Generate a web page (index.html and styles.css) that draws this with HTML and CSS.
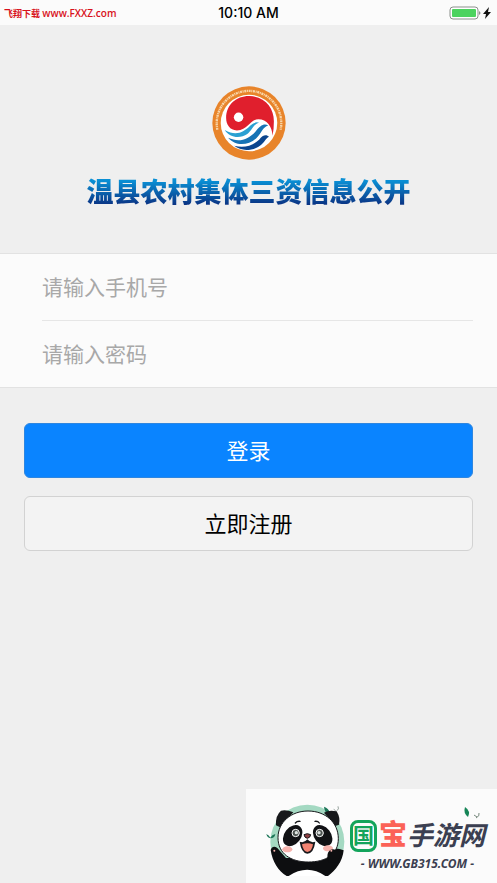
FILE: index.html
```html
<!DOCTYPE html>
<html lang="zh-CN">
<head>
    <meta charset="UTF-8">
    <meta name="viewport" content="width=device-width, initial-scale=1.0">
    <title>温县农村集体三资信息公开</title>
    <link rel="stylesheet" href="styles.css">
</head>
<body>
    <div class="status-bar">
        <span class="source">飞翔下载 <span class="site">www.FXXZ.com</span></span>
        <span class="time">10:10 AM</span>
        <svg class="battery" viewBox="0 0 44 16" width="44" height="16">
            <rect x="1" y="2" width="28" height="12" rx="3" fill="#fff" stroke="#8b8f8b"/>
            <rect x="3" y="4" width="24" height="8" rx="1" fill="#4cd35f"/>
            <path d="M30 6q3 2 0 4z" fill="#8b8f8b"/>
            <path d="M40 2l-6 7h3l-1 5 6-7h-3z" fill="#111"/>
        </svg>
    </div>

    <header class="header">
        <svg class="emblem" viewBox="0 0 220 220" width="74" height="74">
            <circle cx="110" cy="110" r="109" fill="#e8842a"/>
            <path d="M16 130A96 96 0 1 1 204 130" fill="none" stroke="#f8d5a8" stroke-width="7" stroke-dasharray="6 2 3 2"/>
            <circle cx="110" cy="110" r="84" fill="#fff"/>
            <path d="M42 95C42 55 73 29 112 30C158 32 184 66 184 105Q184 130 180 148C179 120 163 99 138 99C112 99 108 132 74 132C53 131 42 115 42 95z" fill="#e01f2d"/>
            <circle cx="79" cy="93" r="14" fill="#fff"/>
            <path d="M38 131C70 150 94 139 115 117Q127 105 140 109C124 112 121 130 105 143C83 158 52 154 38 131z" fill="#2aa0d2"/>
            <path d="M48 154C80 169 107 160 129 136C142 116 158 109 167 118C151 121 147 140 131 156C106 178 69 179 48 154z" fill="#1673b5"/>
            <path d="M66 178C95 185 119 179 140 160C151 144 163 144 169 151C161 155 158 164 148 173C124 194 88 196 66 178z" fill="#0b458e"/>
        </svg>
        <h1>温县农村集体三资信息公开</h1>
    </header>

    <form class="login">
        <div class="fields">
            <input type="tel" placeholder="请输入手机号" aria-label="手机号">
            <input type="password" placeholder="请输入密码" aria-label="密码">
        </div>
        <div class="actions">
            <button type="submit" class="btn btn-primary">登录</button>
            <button type="button" class="btn">立即注册</button>
        </div>
    </form>

    <footer class="brand">
        <svg class="panda" viewBox="0 0 258 246" width="86" height="82">
            <clipPath id="badge"><path d="M0 0H258V234H0z"/></clipPath>
            <circle cx="130" cy="131" r="111" fill="#a4d9c2" clip-path="url(#badge)"/>
            <path d="M7 108q8 3 12 11 5-9 15-11-2 13-15 13Q10 119 7 108zM180 26q14 5 17 16l-2 9q-14-9-15-25z" fill="#1c7658"/>
            <path d="M209 34l6 4M222 25q4 8-3 13" fill="none" stroke="#5d7168" stroke-width="2"/>
            <!-- ears -->
            <path d="M36 82Q34 52 51 38Q67 34 88 43L48 88z" fill="#17181b"/>
            <path d="M180 44Q194 35 218 40Q230 60 225 80L214 84z" fill="#17181b"/>
            <!-- body and paws -->
            <path d="M20 156Q26 140 40 150L66 180H184L196 157Q213 146 239 157C236 190 214 219 192 234H68C43 219 25 191 20 156z" fill="#0d0e10"/>
            <path d="M74 234Q130 196 184 234z" fill="#fff"/>
            <path d="M132 39C184 39 223 73 223 122C223 169 186 192 133 192C80 192 42 167 42 119C42 72 82 39 132 39z" fill="#fff" stroke="#17181b" stroke-width="3"/>
            <!-- face -->
            <ellipse cx="86" cy="113" rx="25" ry="35" transform="rotate(38 86 113)" fill="#111215"/>
            <ellipse cx="176" cy="113" rx="25" ry="35" transform="rotate(-38 176 113)" fill="#111215"/>
            <circle cx="95" cy="105" r="11" fill="#4c5350" stroke="#fff" stroke-width="3"/>
            <circle cx="167" cy="105" r="11" fill="#4c5350" stroke="#fff" stroke-width="3"/>
            <circle cx="97" cy="104" r="5" fill="#dfe5e2"/>
            <circle cx="165" cy="104" r="5" fill="#dfe5e2"/>
            <ellipse cx="70" cy="154" rx="15" ry="9" fill="#f7b4ae"/>
            <ellipse cx="192" cy="151" rx="15" ry="9" fill="#f7b4ae"/>
            <path d="M94 75q5-6 14-5M153 70q9-1 13 5" fill="none" stroke="#17181b" stroke-width="4" stroke-linecap="round"/>
            <path d="M120 110q10-6 20 0-1 9-10 11-9-2-10-11z" fill="#8d3f43" stroke="#17181b" stroke-width="3"/>
            <path d="M107 131q14 5 23-7 10 12 24 7-5 35-24 36-18-2-23-36z" fill="#17181b"/>
            <path d="M114 139q16-7 33 0-3 22-17 23-13-2-16-23z" fill="#f18372"/>
            <path d="M192 164q8-14 22-9l18 8-12 30h-26q-7-14-2-29z" fill="#0d0e10"/>
            <circle cx="202" cy="158" r="3" fill="#f7b4ae"/>
            <circle cx="31" cy="158" r="3" fill="#f7b4ae"/>
        </svg>
        <div class="brand-text">
            <div class="brand-name"><span class="green">国</span><span class="red">宝</span><span class="dark">手游网</span></div>
            <div class="brand-url">- WWW.GB315.COM -</div>
            <svg class="leaf" viewBox="0 0 18 14" width="18" height="14">
                <path d="M2 0q6 4 3 10Q0 6 2 0z" fill="#168557"/>
                <path d="M11 8l3 2M16 6q1 3-3 5" fill="none" stroke="#75877b"/>
            </svg>
        </div>
    </footer>
</body>
</html>
```

FILE: styles.css
```css
* {
    box-sizing: border-box;
}
body {
    font-family: "Liberation Sans", "Noto Sans CJK SC", sans-serif;
    margin: 0;
    min-height: 100vh;
    display: flex;
    flex-direction: column;
    background-color: #efefef;
    color: #000;
}
.status-bar {
    display: grid;
    grid-template-columns: 1fr auto 1fr;
    align-items: center;
    height: 25px;
    padding: 0 4px;
    background-color: #fbfbfb;
}
.source {
    font-family: "Open Sans", "Noto Sans CJK SC", sans-serif;
    font-size: 9px;
    font-weight: 700;
    color: #d8121c;
}
.site {
    font-size: 10px;
    font-weight: 600;
}
.time {
    font-family: Inter, sans-serif;
    font-size: 14px;
    font-weight: 500;
}
.battery {
    justify-self: end;
}
.header {
    display: flex;
    flex-direction: column;
    align-items: center;
    gap: 13px;
    padding: 61px 0 40px;
}
.header h1 {
    margin: 0;
    font-size: 27px;
    line-height: 40px;
    font-weight: 900;
    color: transparent;
    background: linear-gradient(#0a8fd4 20%, #0a2a7c 85%);
    -webkit-background-clip: text;
    background-clip: text;
}
.fields {
    padding: 0 24px 0 42px;
    background-color: #fbfbfb;
    border-top: 1px solid #e2e2e2;
    border-bottom: 1px solid #e2e2e2;
}
.fields input {
    display: block;
    width: 100%;
    height: 66px;
    padding: 2px 0 0;
    border: 0;
    outline: 0;
    border-radius: 0;
    background: none;
    font-family: inherit;
    font-size: 21px;
}
.fields input + input {
    height: 67px;
    border-top: 1px solid #e6e6e6;
}
.fields input::placeholder {
    color: #a8a8a8;
}
.actions {
    display: grid;
    gap: 18px;
    padding: 35px 24px;
}
.btn {
    height: 55px;
    padding: 0 0 4px;
    border: 1px solid #d2d2d2;
    border-radius: 6px;
    background-color: #f3f3f3;
    font-family: inherit;
    font-size: 22px;
    color: #000;
}
.btn-primary {
    background-color: #0a84ff;
    border-color: #2e86e0;
    color: #fff;
}
.brand {
    display: flex;
    align-items: flex-end;
    align-self: flex-end;
    height: 94px;
    margin-top: auto;
    padding: 0 12px 0 18px;
    background-color: #fbfbfb;
}
.panda {
    margin-bottom: 3px;
}
.brand-text {
    position: relative;
    padding-bottom: 11px;
}
.brand-name {
    display: flex;
    align-items: center;
    margin-bottom: 2px;
    font-size: 26px;
    line-height: 36px;
    font-weight: 700;
}
.green {
    margin-right: 2px;
    border: 3px solid #13a45b;
    border-radius: 8px;
    font-size: 21px;
    line-height: 26px;
    color: #13a45b;
}
.red {
    font-size: 28px;
    font-weight: 900;
    color: #fb6257;
}
.dark {
    color: #3b3f51;
    font-style: italic;
}
.brand-url {
    font-family: "Noto Sans", sans-serif;
    font-size: 12px;
    line-height: 16px;
    font-weight: 700;
    font-style: italic;
    text-align: center;
    color: #3b3f51;
}
.leaf {
    position: absolute;
    top: -11px;
    right: 4px;
}
```
